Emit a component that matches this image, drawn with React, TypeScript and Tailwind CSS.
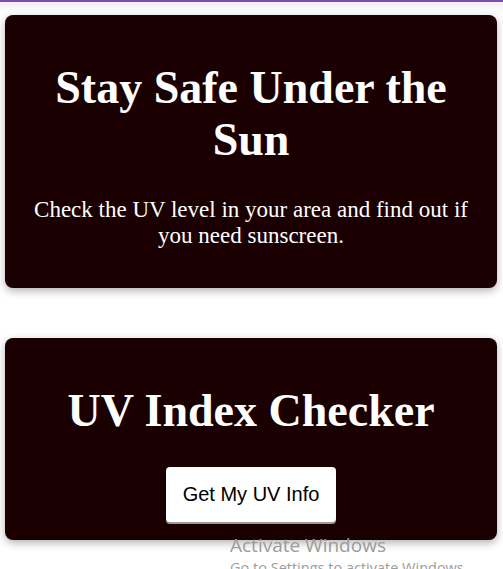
import React from 'react';

const serif = { fontFamily: '"Liberation Serif", "Times New Roman", serif' };

export default function App() {
  return (
    <div className="relative min-h-[569px] bg-white overflow-hidden" style={serif}>
      <div className="h-[2px] bg-[#7a4fae]" />
      <div className="h-[13px] bg-gradient-to-b from-[#f3f1f8] to-white" />

      <main className="flex flex-col gap-[50px] pl-[5px] pr-[6px]">
        <section className="bg-[#1b0002] rounded-[8px] shadow-[0_3px_8px_rgba(0,0,0,0.3)] text-white text-center px-5 pt-[47px] pb-[39px]">
          <h1 className="text-[46px] leading-[52px] font-bold">Stay Safe Under the Sun</h1>
          <p className="mt-[31px] text-[23px] leading-[26px]">
            Check the UV level in your area and find out if you need sunscreen.
          </p>
        </section>

        <section className="bg-[#1b0002] rounded-[8px] shadow-[0_3px_8px_rgba(0,0,0,0.3)] text-white text-center px-5 pt-[47px] pb-[18px]">
          <h2 className="text-[46px] leading-[52px] font-bold">UV Index Checker</h2>
          <button
            className="mt-[30px] bg-white text-black rounded-[4px] px-[17px] py-4 text-[20px] leading-[23px] shadow-[0_2px_0_#9a9a9a]"
            style={{ fontFamily: '"Liberation Sans", Arial, sans-serif' }}
          >
            Get My UV Info
          </button>
        </section>
      </main>

      <div
        className="absolute left-[230px] top-[533px] text-[#9c9c9c] pointer-events-none"
        style={{ fontFamily: '"Open Sans", "Noto Sans", sans-serif' }}
      >
        <div className="text-[19px] leading-[24px]">Activate Windows</div>
        <div className="text-[14.5px] leading-[18px] mt-[2px] whitespace-nowrap">Go to Settings to activate Windows.</div>
      </div>
    </div>
  );
}
